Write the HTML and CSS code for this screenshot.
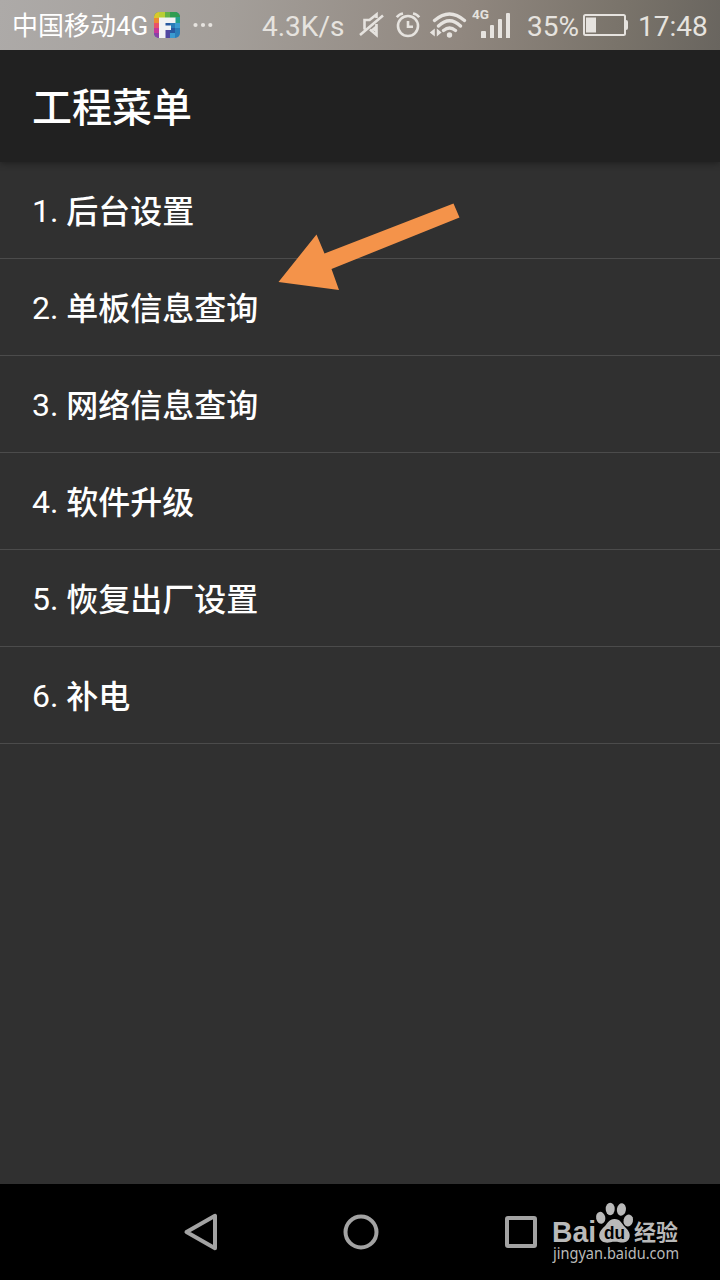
FILE: index.html
```
<!DOCTYPE html>
<html lang="zh-CN">
<head>
<meta charset="utf-8">
<title>工程菜单</title>
<link rel="stylesheet" href="styles.css">
</head>
<body>
<div class="screen">
  <div class="status">
    <span class="carrier">中国移动4G</span>
    <svg class="app-icon" width="26" height="26" viewBox="0 0 26 26">
      <defs><clipPath id="tile"><rect width="26" height="26" rx="5"/></clipPath></defs>
      <g clip-path="url(#tile)">
        <rect width="26" height="26" fill="#2b7db8"/>
        <path fill="#d9c82c" d="M0 0h6v6H0z"/>
        <path fill="#b9ce35" d="M5 0h6v6H5z"/>
        <path fill="#62b146" d="M11 0h6v6h-6z"/>
        <path fill="#2f9c50" d="M16 0h10v6H16z"/>
        <path fill="#23a08e" d="M21 5h5v6h-5z"/>
        <path fill="#ec8a35" d="M0 6h6v5H0z"/>
        <path fill="#e9516a" d="M0 11h6v5H0z"/>
        <path fill="#c5379a" d="M0 16h6v5H0z"/>
        <path fill="#8b3fa5" d="M0 21h6v5H0z"/>
        <path fill="#5047a0" d="M11 17h5v9h-5z"/>
        <path fill="#2858a0" d="M11 10h5v5h-5zM16 16h5v5h-5z"/>
        <path fill="#3b9bd0" d="M21 11h5v5h-5zM16 21h5v5h-5z"/>
        <path fill="#f1f2f4" d="M5 5.500h16.500v5.500H11.500v2.500H17V18h-5.500v8H5z"/>
      </g>
    </svg>
    <svg class="dots" width="20" height="6" viewBox="0 0 20 6"><g class="solid"><circle cx="2.5" cy="3" r="2.1"/><circle cx="10" cy="3" r="2.1"/><circle cx="17.3" cy="3" r="2.1"/></g></svg>
    <span class="speed">4.3K/s</span>
    <svg class="mute" width="26" height="28" viewBox="0 0 26 28">
      <path class="line" d="M17.500 7V3.500l-7 5.500H5.500v9.500M17.500 13v11l-6.500-5.500M1 24L24 4.500"/>
      <path class="solid" d="M12 18.500l6-5v8z"/>
    </svg>
    <svg class="alarm" width="26" height="28" viewBox="0 0 26 28">
      <circle class="line" cx="13" cy="15" r="10"/>
      <path class="line" d="M13 10v5.800h5M1.800 6.300Q4 3.200 8 2.500M24.200 6.300Q22 3.200 18 2.500"/>
    </svg>
    <svg class="wifi" width="38" height="28" viewBox="0 0 38 28">
      <g class="line wave"><path d="M5.500 9.500Q20.500-3.500 35.500 9.500M9.500 15Q20.500 4.500 31.500 15M14.500 19.500Q20.500 14.500 26.500 19.500"/></g>
      <circle class="solid" cx="20.500" cy="24" r="2.700"/>
      <path class="solid" d="M5.800 17.500v8L.8 21.500zM7.800 17.500v8l4.800-4z"/>
    </svg>
    <svg class="signal" width="40" height="34" viewBox="0 0 40 34">
      <text class="net" x="0" y="15" textLength="17" lengthAdjust="spacingAndGlyphs">4G</text>
      <path class="solid" d="M9 28q0-1 1-1h3q1 0 1 1v6H9zM18 22q0-1 1-1h2q1 0 1 1v12h-4zM26 16q0-1 1-1h2q1 0 1 1v18h-4zM34 10q0-1 1-1h2q1 0 1 1v24h-4z"/>
    </svg>
    <span class="percent">35%</span>
    <svg class="battery" width="45" height="22" viewBox="0 0 45 22">
      <rect class="case" x="1" y="1" width="41" height="20" rx="1.500"/>
      <path class="solid" d="M3 3.500h10v15H3zM43 6q2 0 2 2v6q0 2-2 2z"/>
    </svg>
    <span class="clock">17:48</span>
  </div>
  <header class="title-bar">工程菜单</header>
  <ul class="menu">
    <li>1. <b>后台设置</b></li>
    <li>2. <b>单板信息查询</b></li>
    <li>3. <b>网络信息查询</b></li>
    <li>4. <b>软件升级</b></li>
    <li>5. <b>恢复出厂设置</b></li>
    <li>6. <b>补电</b></li>
  </ul>
  <nav class="nav">
    <svg class="back" width="36" height="40" viewBox="0 0 36 40"><path d="M3.500 20L32 3.800v32.400z"/></svg>
    <svg class="home" width="36" height="36" viewBox="0 0 36 36"><circle cx="18" cy="18" r="15.500"/></svg>
    <svg class="recent" width="32" height="32" viewBox="0 0 32 32"><rect x="2" y="2" width="28" height="28" rx="1"/></svg>
  </nav>
  <svg class="arrow" width="184" height="92" viewBox="0 0 184 92"><path d="M177.500 4.500L183.500 18.500 55.500 70 63 91 2.500 83 40.500 35.500 48.500 54.500z"/></svg>
  <svg class="watermark" width="132" height="66" viewBox="0 0 132 66">
    <text class="brand" x="0" y="42" textLength="44" lengthAdjust="spacingAndGlyphs">Bai</text>
    <ellipse cx="48.700" cy="17.800" rx="4.600" ry="6" transform="rotate(-12 48.700 17.800)"/>
    <ellipse cx="58.200" cy="9" rx="4.500" ry="6.200"/>
    <ellipse cx="69.400" cy="9.500" rx="4.500" ry="6.200" transform="rotate(8 69.400 9.500)"/>
    <ellipse cx="76.300" cy="20.500" rx="4.700" ry="6" transform="rotate(15 76.300 20.500)"/>
    <path d="M62.500 19c6 0 7 4.500 10.500 8 4 4 5.500 7 4.500 10.500-1.500 5-6 5.500-10 4.800-3.500-.6-6-.6-9 0-5 1-9.500 0-11-4.800-1-4 1-7.500 5-11C56 23 57 19 62.500 19z"/>
    <text class="du" x="52" y="39" textLength="21" lengthAdjust="spacingAndGlyphs">du</text>
    <text class="cn" x="82" y="40" textLength="44" lengthAdjust="spacingAndGlyphs">经验</text>
    <text class="url" x="1" y="58.500" textLength="126" lengthAdjust="spacingAndGlyphs">jingyan.baidu.com</text>
  </svg>
</div>
</body>
</html>
```
FILE: styles.css
```
body {
  margin: 0;
  background: #303030;
  font-family: Roboto, "Noto Sans CJK SC", sans-serif;
}
.screen {
  position: relative;
  display: flex;
  flex-direction: column;
  width: 720px;
  height: 1280px;
  overflow: hidden;
}
.status {
  position: relative;
  z-index: 1;
  display: flex;
  align-items: center;
  flex: none;
  height: 50px;
  background: linear-gradient(100deg, #adaaa8 0%, #a39e99 32%, #90877f 64%, #79736a 86%, #69655f 100%);
  color: #e6e3df;
  font-size: 28px;
  line-height: 50px;
  white-space: nowrap;
}
.status svg, .status span { flex: none; }
.carrier { width: 136px; margin: 1px 0 0 12px; color: #fff; font-size: 26px; }
.app-icon { margin-left: 6px; }
.dots { margin-left: 13px; }
.speed { width: 84px; margin: 4px 0 0 49px; }
.mute { margin-left: 13px; }
.alarm { margin-left: 10px; }
.wifi { margin-left: 8px; }
.signal { margin: -8px 0 0 5px; }
.percent { width: 52px; margin: 4px 0 0 15px; }
.battery { margin-left: 4px; }
.clock { margin: 4px 0 0 10px; }
.solid { fill: #e6e3df; }
.line { fill: none; stroke: #e6e3df; stroke-width: 2.6; }
.wave { stroke-width: 3.3; stroke-linecap: round; }
.case { fill: none; stroke: #e6e3df; stroke-width: 2; }
.net { font: bold 13px Roboto, sans-serif; fill: #e6e3df; }
.title-bar {
  flex: none;
  box-sizing: border-box;
  height: 112px;
  padding: 4px 32px 0;
  background: #212121;
  box-shadow: 0 1px 7px rgba(0, 0, 0, 0.4);
  color: #fff;
  font-size: 40px;
  font-weight: 500;
  line-height: 110px;
}
.menu { margin: 0; padding: 0; list-style: none; }
.menu li {
  box-sizing: border-box;
  height: 97px;
  padding: 1px 32px 0;
  border-bottom: 1px solid #4b4b4b;
  color: #fff;
  font-size: 32px;
  line-height: 96px;
}
.menu b { position: relative; top: 1px; font-weight: 500; }
.nav {
  display: flex;
  align-items: center;
  flex: none;
  height: 96px;
  margin-top: auto;
  background: #000;
}
.nav svg { fill: none; stroke: #a3a3a3; stroke-width: 4; stroke-linejoin: round; }
.back { margin-left: 183px; }
.home { margin-left: 124px; }
.recent { margin-left: 126px; }
.arrow { position: absolute; left: 276px; top: 199px; fill: #f4934a; }
.watermark { position: absolute; left: 552px; top: 1200px; fill: #b9b9b9; }
.brand { font: bold 29px "Liberation Sans", sans-serif; }
.du { font: bold 18px "Liberation Sans", sans-serif; fill: #000; }
.cn { font: bold 22px "Noto Sans CJK SC", sans-serif; }
.url { font: 15.5px "Noto Sans", sans-serif; }
```
